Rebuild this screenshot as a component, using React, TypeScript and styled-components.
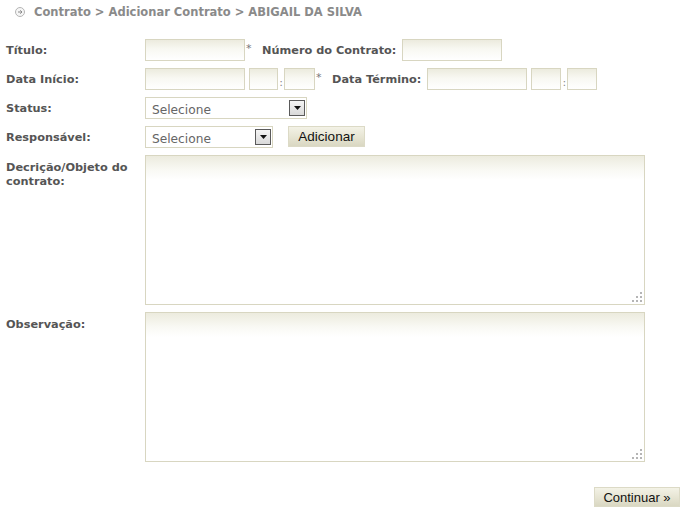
import React from "react";
import styled, { createGlobalStyle } from "styled-components";

const GlobalStyle = createGlobalStyle`
  html, body {
    margin: 0;
    padding: 0;
    background: #ffffff;
  }
  body {
    font-family: "DejaVu Sans", Verdana, sans-serif;
  }
`;

const Page = styled.div`
  width: 689px;
  height: 516px;
  box-sizing: border-box;
  padding: 5px 9px 0 6px;
`;

const Breadcrumb = styled.div`
  display: flex;
  align-items: center;
  gap: 9px;
  height: 14px;
  padding-left: 9px;
  font-size: 11.5px;
  font-weight: bold;
  color: #8a8a8a;
`;

const Form = styled.div`
  display: flex;
  flex-direction: column;
  gap: 7px;
  margin-top: 20px;
`;

const Row = styled.div<{ $top?: boolean }>`
  display: flex;
  align-items: ${({ $top }) => ($top ? "flex-start" : "center")};
`;

const Label = styled.label<{ $inline?: boolean }>`
  flex: ${({ $inline }) => ($inline ? "none" : "0 0 139px")};
  width: ${({ $inline }) => ($inline ? "auto" : "139px")};
  margin: ${({ $inline }) => ($inline ? "0 6px 0 7px" : "0")};
  padding-top: 2px;
  font-size: 11.3px;
  font-weight: bold;
  line-height: 14px;
  color: #555555;
`;

const TopLabel = styled(Label)`
  padding-top: 6px;
`;

const fieldBg = `
  background: linear-gradient(to bottom, #ecebde 0%, #f8f8f2 45%, #ffffff 100%);
  border: 1px solid #d8d6c1;
  box-sizing: border-box;
`;

const Input = styled.input<{ $w: number }>`
  ${fieldBg}
  width: ${({ $w }) => $w}px;
  height: 22px;
  margin: 0;
  padding: 2px 4px;
  font-family: "DejaVu Sans", Verdana, sans-serif;
  font-size: 11px;
  outline: none;
`;

const Star = styled.span`
  width: 9px;
  padding-left: 1px;
  font-size: 11px;
  color: #777777;
  align-self: flex-start;
  margin-top: 3px;
`;

const Colon = styled.span`
  width: 6px;
  text-align: center;
  font-size: 11px;
  color: #888888;
  align-self: flex-end;
  margin-bottom: 1px;
`;

const Gap = styled.span<{ $w: number }>`
  width: ${({ $w }) => $w}px;
`;

const SelectBox = styled.div<{ $w: number }>`
  display: flex;
  align-items: center;
  width: ${({ $w }) => $w}px;
  height: 22px;
  box-sizing: border-box;
  border: 1px solid #d8d6c1;
  background: #ffffff;
  padding-right: 1px;
`;

const NativeSelect = styled.select`
  flex: 1;
  min-width: 0;
  height: 100%;
  appearance: none;
  border: none;
  background: transparent;
  padding: 3px 0 0 6px;
  font-family: "DejaVu Sans", Verdana, sans-serif;
  font-size: 12.2px;
  color: #666666;
  outline: none;
`;

const Arrow = styled.span`
  display: flex;
  align-items: center;
  justify-content: center;
  width: 16px;
  height: 16px;
  box-sizing: border-box;
  border: 1px solid #5a5a5a;
  background: linear-gradient(to bottom, #f4f4f4, #d9d9d9);
`;

const Button = styled.button`
  height: 21px;
  padding: 0 10px;
  border: 1px solid #dcdac6;
  background: linear-gradient(to bottom, #f3f2e6 0%, #e6e4d2 55%, #d9d7c2 100%);
  font-family: "Liberation Sans", Arial, sans-serif;
  font-size: 13.5px;
  color: #111111;
  cursor: pointer;
`;

const AddButton = styled(Button)`
  margin-left: 15px;
  width: 77px;
  padding: 0;
  align-self: flex-start;
`;

const Area = styled.div`
  position: relative;
  width: 500px;
  height: 150px;
`;

const TextArea = styled.textarea`
  ${fieldBg}
  display: block;
  width: 100%;
  height: 100%;
  margin: 0;
  padding: 4px;
  resize: none;
  font-family: "DejaVu Sans", Verdana, sans-serif;
  font-size: 11px;
  outline: none;
  background: linear-gradient(to bottom, #ecebde 0px, #f9f9f4 14px, #ffffff 24px);
`;

const Grip = styled.svg`
  position: absolute;
  right: 3px;
  bottom: 3px;
`;

const Footer = styled.div`
  display: flex;
  justify-content: flex-end;
  margin-top: 25px;
`;

const NextButton = styled(Button)`
  width: 86px;
  height: 20px;
  padding: 0;
  font-size: 13px;
`;

const CircleIcon = () => (
  <svg width="10" height="10" viewBox="0 0 10 10">
    <circle cx="5" cy="5" r="4.5" fill="#f6f6f6" stroke="#b4b4b4" />
    <path d="M3 5h4M5.3 3.3L7 5 5.3 6.7" stroke="#8a8a8a" strokeWidth="1" fill="none" />
  </svg>
);

const ArrowDown = () => (
  <svg width="7" height="4" viewBox="0 0 7 4">
    <path d="M0 0h7L3.5 4z" fill="#111111" />
  </svg>
);

const ResizeGrip = () => (
  <Grip width="10" height="10" viewBox="0 0 10 10">
    {[
      [8, 0],
      [4, 4],
      [8, 4],
      [0, 8],
      [4, 8],
      [8, 8],
    ].map(([x, y]) => (
      <rect key={`${x}-${y}`} x={x} y={y} width="2" height="2" fill="#b5b5b5" />
    ))}
  </Grip>
);

const Select: React.FC<{ width: number }> = ({ width }) => (
  <SelectBox $w={width}>
    <NativeSelect defaultValue="">
      <option value="">Selecione</option>
    </NativeSelect>
    <Arrow>
      <ArrowDown />
    </Arrow>
  </SelectBox>
);

const Field: React.FC = () => (
  <Area>
    <TextArea />
    <ResizeGrip />
  </Area>
);

export default function App() {
  return (
    <Page>
      <GlobalStyle />
      <Breadcrumb>
        <CircleIcon />
        <span>Contrato &gt; Adicionar Contrato &gt; ABIGAIL DA SILVA</span>
      </Breadcrumb>
      <Form>
        <Row>
          <Label>Título:</Label>
          <Input $w={100} />
          <Star>*</Star>
          <Label $inline>Número do Contrato:</Label>
          <Input $w={100} />
        </Row>
        <Row>
          <Label>Data Início:</Label>
          <Input $w={100} />
          <Gap $w={4} />
          <Input $w={29} />
          <Colon>:</Colon>
          <Input $w={31} />
          <Star>*</Star>
          <Label $inline>Data Término:</Label>
          <Input $w={100} />
          <Gap $w={4} />
          <Input $w={30} />
          <Colon>:</Colon>
          <Input $w={30} />
        </Row>
        <Row>
          <Label>Status:</Label>
          <Select width={162} />
        </Row>
        <Row>
          <Label>Responsável:</Label>
          <Select width={128} />
          <AddButton>Adicionar</AddButton>
        </Row>
        <Row $top>
          <TopLabel>
            Decrição/Objeto do
            <br />
            contrato:
          </TopLabel>
          <Field />
        </Row>
        <Row $top>
          <TopLabel>Observação:</TopLabel>
          <Field />
        </Row>
      </Form>
      <Footer>
        <NextButton>Continuar »</NextButton>
      </Footer>
    </Page>
  );
}
